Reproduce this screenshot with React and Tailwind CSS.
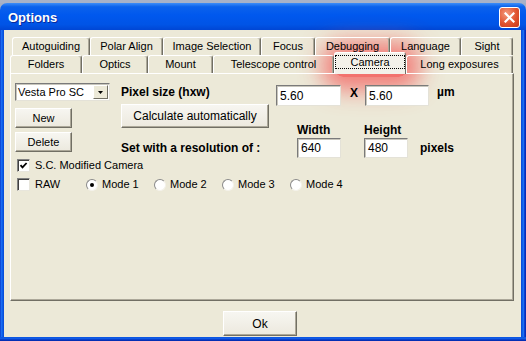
import React from "react";

const F = "font-['Liberation_Sans',Arial,sans-serif]";

function Tab({ w, children }) {
  return (
    <div
      className={`${w} h-full flex items-center justify-center border-t border-l border-r border-t-white border-l-white border-r-[#716F64] rounded-t-[3px] shadow-[inset_-1px_0_#ACA899] text-[11px] text-black whitespace-nowrap`}
    >
      {children}
    </div>
  );
}

function Btn({ w, h, children, extra = "" }) {
  return (
    <div
      className={`${w} ${h} ${extra} flex items-center justify-center border border-t-white border-l-white border-b-[#716F64] border-r-[#716F64] shadow-[inset_-1px_-1px_#ACA899] bg-[linear-gradient(180deg,#F7F6F1,#ECE9DE)] text-[11px] text-black whitespace-nowrap`}
    >
      {children}
    </div>
  );
}

function Input({ w, h, value }) {
  return (
    <div
      className={`${w} ${h} bg-white border border-t-[#7A7A7A] border-l-[#7A7A7A] border-b-[#E4E2D8] border-r-[#E4E2D8] shadow-[inset_1px_1px_#C8C6BC] flex items-center pl-[3px] text-[12px] text-black`}
    >
      {value}
    </div>
  );
}

function CheckBox({ checked }) {
  return (
    <div className="w-[13px] h-[13px] bg-white border border-t-[#808080] border-l-[#808080] border-b-[#E8E6DC] border-r-[#E8E6DC] shadow-[inset_1px_1px_#404040] flex items-center justify-center shrink-0">
      {checked && (
        <svg width="9" height="9" viewBox="0 0 9 9">
          <path d="M1.5 4.2 L3.5 6.4 L7.6 2" stroke="#000" strokeWidth="1.8" fill="none" />
        </svg>
      )}
    </div>
  );
}

function Radio({ checked }) {
  return (
    <div className="w-[12px] h-[12px] rounded-full bg-white border border-t-[#8A8A8A] border-l-[#8A8A8A] border-b-[#F4F2EA] border-r-[#F4F2EA] flex items-center justify-center shrink-0">
      {checked && <div className="w-[4px] h-[4px] rounded-full bg-black" />}
    </div>
  );
}

export default function App() {
  return (
    <div className={`w-[526px] h-[341px] overflow-hidden bg-[#A3AEC4] ${F}`}>
      <div className="h-[3px] bg-[#A7B2C8]" />
      {/* title bar */}
      <div className="h-[27px] rounded-t-[7px] bg-[linear-gradient(180deg,#3D8EF8_0%,#0B62EC_14%,#0058EE_45%,#0054E6_80%,#0046D4_100%)] flex items-center pl-[8px] pr-[6px]">
        <span className="text-white font-bold text-[13px] mt-[2px] [text-shadow:1px_1px_0_#0A2A9A]">
          Options
        </span>
        <div className="ml-auto w-[21px] h-[21px] mt-[1px] rounded-[3px] border border-white bg-[radial-gradient(circle_at_35%_30%,#F49A7E,#E0532F_55%,#C6381A)] flex items-center justify-center">
          <svg width="11" height="11" viewBox="0 0 11 11">
            <path d="M1.5 1.5 L9.5 9.5 M9.5 1.5 L1.5 9.5" stroke="#fff" strokeWidth="2.2" strokeLinecap="square" />
          </svg>
        </div>
      </div>
      {/* body */}
      <div className="flex h-[307px]">
        <div className="w-[4px] bg-[linear-gradient(90deg,#0A36C8,#1E6FF2,#0C5CE8,#0848D2)]" />
        <div className="relative w-[517px] bg-[#ECE9D8] flex flex-col">
          {/* highlight glow around the Camera tab */}
          <div className="absolute left-[331px] top-[25px] w-[72px] h-[22px] rounded-[8px] bg-[rgba(244,84,84,0.8)] shadow-[0_0_22px_13px_rgba(244,84,84,0.72)]" />
          <div className="h-[7px]" />
          {/* tab row 1 */}
          <div className="relative flex h-[18px] ml-[8px]">
            <Tab w="w-[78px]">Autoguiding</Tab>
            <Tab w="w-[73px]">Polar Align</Tab>
            <Tab w="w-[98px]">Image Selection</Tab>
            <Tab w="w-[54px]">Focus</Tab>
            <Tab w="w-[75px]">Debugging</Tab>
            <Tab w="w-[71px]">Language</Tab>
            <Tab w="w-[52px]">Sight</Tab>
          </div>
          {/* tab row 2 */}
          <div className="relative z-10 flex h-[18px] ml-[6px] items-end">
            <Tab w="w-[72px]">Folders</Tab>
            <Tab w="w-[66px]">Optics</Tab>
            <Tab w="w-[65px]">Mount</Tab>
            <Tab w="w-[121px]">Telescope control</Tab>
            <div className="w-[72px] h-[22px] -mb-[1px] bg-[#F3F1EA] border-t border-l border-r border-t-white border-l-white border-r-[#716F64] rounded-t-[3px] flex flex-col items-stretch">
              <div className="mt-[2px] h-[14px] outline-1 outline-dotted outline-black -outline-offset-1 flex items-center justify-center text-[11px] text-black">
                Camera
              </div>
            </div>
            <Tab w="w-[107px]">Long exposures</Tab>
          </div>
          {/* panel */}
          <div className="relative w-[504px] h-[228px] ml-[6px] border border-t-white border-l-white border-r-[#716F64] border-b-[#716F64] shadow-[inset_-1px_-1px_#ACA899] pl-[4px] pt-[9px] flex flex-col">
            <div className="flex h-[75px]">
              {/* left col */}
              <div className="w-[95px] flex flex-col">
                <div className="w-[95px] h-[18px] bg-white border border-t-[#7A7A7A] border-l-[#7A7A7A] border-b-[#E4E2D8] border-r-[#E4E2D8] shadow-[inset_1px_1px_#C8C6BC] flex items-center">
                  <span className="pl-[2px] text-[11px] text-black flex-1">Vesta Pro SC</span>
                  <div className="w-[15px] h-[14px] mr-[1px] bg-[#ECE9D8] border border-t-white border-l-white border-b-[#716F64] border-r-[#716F64] flex items-center justify-center">
                    <svg width="5" height="3" viewBox="0 0 5 3">
                      <path d="M0 0 H5 L2.5 3 Z" fill="#000" />
                    </svg>
                  </div>
                </div>
                <Btn w="w-[57px]" h="h-[20px]" extra="mt-[7px]">New</Btn>
                <Btn w="w-[57px]" h="h-[20px]" extra="mt-[4px]">Delete</Btn>
              </div>
              {/* middle col */}
              <div className="w-[149px] ml-[11px] flex flex-col">
                <div className="mt-[2px] h-[14px] leading-[14px] text-[12px] font-bold text-black whitespace-nowrap">Pixel size (hxw)</div>
                <Btn w="w-[148px]" h="h-[24px]" extra="mt-[5px] text-[12px]">Calculate automatically</Btn>
                <div className="mt-[13px] h-[14px] leading-[14px] text-[12px] font-bold text-black whitespace-nowrap">Set with a resolution of :</div>
              </div>
              {/* right */}
              <div className="ml-[6px] flex flex-col">
                <div className="mt-[2px] flex items-start">
                  <Input w="w-[65px]" h="h-[21px]" value="5.60" />
                  <div className="w-[24px] pl-[9px] mt-[1px] leading-[14px] text-[12px] font-bold text-black">X</div>
                  <Input w="w-[64px]" h="h-[21px]" value="5.60" />
                  <div className="ml-[8px] leading-[14px] text-[12px] font-bold text-black">µm</div>
                </div>
                <div className="mt-[17px] flex items-end">
                  <div className="ml-[21px] w-[44px] flex flex-col">
                    <div className="h-[15px] leading-[14px] text-[12px] font-bold text-black">Width</div>
                    <Input w="w-[44px]" h="h-[20px]" value="640" />
                  </div>
                  <div className="ml-[23px] w-[44px] flex flex-col">
                    <div className="h-[15px] leading-[15px] text-[12px] font-bold text-black">Height</div>
                    <Input w="w-[44px]" h="h-[20px]" value="480" />
                  </div>
                  <div className="ml-[12px] h-[20px] leading-[20px] text-[12px] font-bold text-black">pixels</div>
                </div>
              </div>
            </div>
            {/* checkbox row */}
            <div className="mt-[1px] flex items-center h-[13px] pl-[2px]">
              <CheckBox checked />
              <span className="ml-[5px] text-[11px] text-black leading-[13px]">S.C. Modified Camera</span>
            </div>
            <div className="mt-[6px] flex items-center h-[13px]">
              <div className="w-[71px] pl-[2px] flex items-center">
                <CheckBox />
                <span className="ml-[5px] text-[11px] text-black">RAW</span>
              </div>
              <div className="w-[68px] flex items-center">
                <Radio checked />
                <span className="ml-[4px] text-[11px] text-black">Mode 1</span>
              </div>
              <div className="w-[68px] flex items-center">
                <Radio />
                <span className="ml-[4px] text-[11px] text-black">Mode 2</span>
              </div>
              <div className="w-[68px] flex items-center">
                <Radio />
                <span className="ml-[4px] text-[11px] text-black">Mode 3</span>
              </div>
              <div className="w-[68px] flex items-center">
                <Radio />
                <span className="ml-[4px] text-[11px] text-black">Mode 4</span>
              </div>
            </div>
          </div>
          <Btn w="w-[74px]" h="h-[25px]" extra="relative mt-[10px] ml-[219px] text-[12px]">Ok</Btn>
        </div>
        <div className="w-[5px] bg-[linear-gradient(90deg,#0848D2,#0C5CE8,#1E6FF2,#0A36C8,#0028B0)]" />
      </div>
      <div className="h-[4px] bg-[linear-gradient(180deg,#0A52DE,#1260EA,#0A3CC8,#0026A8)]" />
    </div>
  );
}
